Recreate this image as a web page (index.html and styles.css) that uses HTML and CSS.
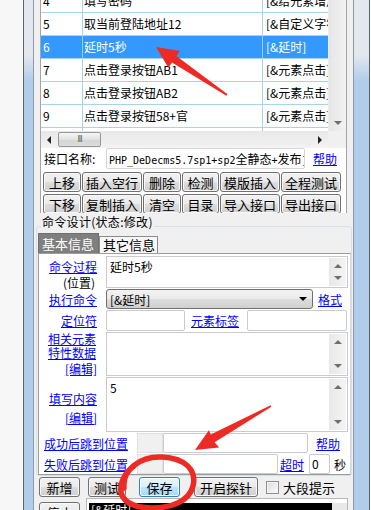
FILE: index.html
```html
<!doctype html>
<html lang="zh-CN">

<head>
  <meta charset="UTF-8">
  <title>接口设计</title>
  <link rel="stylesheet" href="styles.css">
</head>

<body>
  <div class="desk">
    <div class="outside"></div>
    <div class="win">
      <div class="client">

        <!-- command list + interface name + toolbar -->
        <div class="top">
          <div class="list">
            <div class="rows">
              <div class="rows-inner">
                <div class="row"><span class="c1">4</span><span class="c2">填写密码</span><span class="c3">[&amp;给元素增加属性]</span></div>
                <div class="row"><span class="c1">5</span><span class="c2">取当前登陆地址12</span><span class="c3">[&amp;自定义字符串]</span></div>
                <div class="row sel"><span class="c1">6</span><span class="c2">延时5秒</span><span class="c3">[&amp;延时]</span></div>
                <div class="row"><span class="c1">7</span><span class="c2">点击登录按钮AB1</span><span class="c3">[&amp;元素点击]</span></div>
                <div class="row"><span class="c1">8</span><span class="c2">点击登录按钮AB2</span><span class="c3">[&amp;元素点击]</span></div>
                <div class="row"><span class="c1">9</span><span class="c2">点击登录按钮58+官</span><span class="c3">[&amp;元素点击]</span></div>
                <div class="row"><span class="c1">10</span><span class="c2"></span><span class="c3"></span></div>
              </div>
            </div>
            <div class="vscroll"><span class="tri-down"></span></div>
          </div>
          <div class="hscroll">
            <div class="htrack">
              <span class="tri-left"></span>
              <span class="hthumb">III</span>
              <span class="tri-right"></span>
            </div>
            <div class="corner"></div>
          </div>

          <div class="name-row">
            <span class="name-label">接口名称:</span>
            <div class="input name-input">PHP_DeDecms5.7sp1+sp2<span class="cjk">全静态</span>+<span class="cjk">发布</span>]</div>
            <a class="link">帮助</a>
          </div>

          <div class="tools">
            <button class="btn">上移</button>
            <button class="btn">插入空行</button>
            <button class="btn">删除</button>
            <button class="btn">检测</button>
            <button class="btn">模版插入</button>
            <button class="btn">全程测试</button>
            <button class="btn">下移</button>
            <button class="btn">复制插入</button>
            <button class="btn">清空</button>
            <button class="btn">目录</button>
            <button class="btn">导入接口</button>
            <button class="btn">导出接口</button>
          </div>
        </div>

        <!-- command design group -->
        <div class="group">
          <div class="group-title">命令设计(状态:修改)</div>
          <div class="tabs">
            <span class="tab on">基本信息</span>
            <span class="tab">其它信息</span>
          </div>
          <div class="panel">
            <div class="frow r1">
              <div class="lab">
                <a class="link">命令过程</a>
                <span class="plain">(位置)</span>
              </div>
              <div class="memo">
                <div class="memo-text">延时5秒</div>
                <div class="mscroll"><span class="tri-up"></span><span class="tri-dn"></span></div>
              </div>
            </div>

            <div class="frow r2">
              <div class="lab mid"><a class="link">执行命令</a></div>
              <div class="combo"><span>[&amp;延时]</span><span class="combo-arrow"></span></div>
              <a class="link fmt">格式</a>
            </div>

            <div class="frow r3">
              <div class="lab mid"><a class="link">定位符</a></div>
              <div class="input loc"></div>
              <a class="link tag">元素标签</a>
              <div class="input tagval"></div>
            </div>

            <div class="frow r4">
              <div class="lab stack">
                <a class="link wrap">相关元素特性数据</a>
                <a class="link">[编辑]</a>
              </div>
              <div class="memo">
                <div class="memo-text"></div>
                <div class="mscroll"><span class="tri-up"></span><span class="tri-dn"></span></div>
              </div>
            </div>

            <div class="frow r5">
              <div class="lab center">
                <a class="link">填写内容</a>
                <a class="link">[编辑]</a>
              </div>
              <div class="memo">
                <div class="memo-text">5</div>
                <div class="mscroll"><span class="tri-up"></span><span class="tri-dn"></span></div>
              </div>
            </div>

            <div class="jrow">
              <a class="link jlab">成功后跳到位置</a>
              <div class="jbox"></div>
              <div class="input jin ok"></div>
              <a class="link help2">帮助</a>
            </div>

            <div class="jrow">
              <a class="link jlab">失败后跳到位置</a>
              <div class="jbox"></div>
              <div class="input jin fail"></div>
              <a class="link">超时</a>
              <div class="input secs">0</div>
              <span class="plain">秒</span>
            </div>
          </div>
        </div>

        <!-- bottom actions -->
        <div class="actions">
          <button class="btn w41">新增</button>
          <button class="btn w38 gap8">测试</button>
          <button class="btn w41 hot gap13">保存</button>
          <button class="btn w64 gap14">开启探针</button>
          <span class="check"></span>
          <span class="check-label">大段提示</span>
        </div>
        <div class="last">
          <button class="btn w41">停止</button>
          <div class="log">
            <div class="log-text">[&amp;延时]</div>
            <div class="log-scroll"></div>
          </div>
        </div>

      </div>
    </div>
  </div>

  <!-- red annotations drawn over the screenshot -->
  <svg class="marks" width="371" height="510" viewBox="0 0 371 510">
    <polygon points="156,47 180,51 176.4,56 227.6,94.2 226.4,95.8 172,62.6 168.4,67.8" />
    <polygon points="195,450 208.9,430.3 210.8,434.5 270.6,405.3 271.4,406.7 214.6,442.3 219.1,447.5" />
    <path d="M124 488 C122 470 140 456 162 457 C185 458 197 470 193 486 C189 502 170 508 152 508 C132 508 119 500 121 487 C122 478 128 470 134 466" />
  </svg>
</body>

</html>
```

FILE: styles.css
```css
html,
body {
  margin: 0;
  background-color: #fff;
  height: 100%;
  overflow: hidden;
}

body {
  width: 371px;
  height: 510px;
  font-family: "Noto Sans CJK SC", "Noto Sans", sans-serif;
  font-size: 12px;
  color: #000;
}

.desk {
  display: flex;
  height: 510px;
}

.outside {
  width: 23px;
  flex: none;
  background-color: #f7f7f7;
}

/* window frame (Win7 basic look) */

.win {
  width: 347px;
  box-sizing: border-box;
  flex: none;
  display: flex;
  border-left: 1px solid #5a6470;
  border-right: 1px solid #5a6470;
  padding: 0 15px 0 9px;
  background: linear-gradient(to bottom, #e3e8ee 0, #e3e8ee 55px, #b2cdea 80px, #b2cdea 100%);
}

.client {
  width: 321px;
  box-sizing: border-box;
  border-left: 1px solid #8d9cab;
  border-right: 1px solid #8d9cab;
  background-color: #f0f0f0;
  display: flex;
  flex-direction: column;
}

/* top white box */

.top {
  margin: 0 6px;
  height: 213px;
  overflow: hidden;
  background-color: #fff;
  border-left: 1px solid #a5a5a5;
  border-right: 1px solid #a5a5a5;
  flex: none;
}

.list {
  display: flex;
  height: 131px;
}

.rows {
  width: 287px;
  overflow: hidden;
}

.rows-inner {
  margin-top: -10px;
}

.row {
  display: grid;
  grid-template-columns: 42px 180px 1fr;
  height: 23px;
  box-sizing: border-box;
  border-bottom: 1px solid #a4d6e8;
  line-height: 22px;
  white-space: nowrap;
}

.row span {
  overflow: hidden;
}

.c1 {
  padding-left: 2px;
  border-right: 1px solid #a4d6e8;
}

.c2 {
  padding-left: 1px;
  border-right: 1px solid #a4d6e8;
}

.c3 {
  padding-left: 3px;
}

.row.sel {
  background-color: #3399ff;
  color: #fff;
}

.row.sel .c1,
.row.sel .c2 {
  border-right-color: #9ccaf6;
}

.vscroll {
  width: 18px;
  background: linear-gradient(to right, #e6e6e6, #f2f2f2);
  border-left: 1px solid #ececec;
  display: flex;
  align-items: flex-end;
  justify-content: center;
  padding-bottom: 6px;
  box-sizing: border-box;
}

.tri-down,
.tri-dn {
  width: 0;
  height: 0;
  border-left: 4px solid transparent;
  border-right: 4px solid transparent;
  border-top: 4px solid #6e6e6e;
}

.tri-up {
  width: 0;
  height: 0;
  border-left: 4px solid transparent;
  border-right: 4px solid transparent;
  border-bottom: 4px solid #6e6e6e;
}

.hscroll {
  display: flex;
  height: 17px;
}

.htrack {
  width: 287px;
  display: flex;
  align-items: center;
  background: linear-gradient(to bottom, #e8e8e8, #f3f3f3);
  padding: 0 6px 0 6px;
  box-sizing: border-box;
}

.tri-left {
  width: 0;
  height: 0;
  border-top: 4px solid transparent;
  border-bottom: 4px solid transparent;
  border-right: 4px solid #222;
}

.tri-right {
  margin-left: auto;
  width: 0;
  height: 0;
  border-top: 4px solid transparent;
  border-bottom: 4px solid transparent;
  border-left: 4px solid #222;
}

.hthumb {
  margin-left: 7px;
  width: 43px;
  height: 15px;
  box-sizing: border-box;
  border: 1px solid #979797;
  border-radius: 2px;
  background: linear-gradient(to bottom, #f5f5f5, #e2e2e2 50%, #d4d4d4 51%, #dcdcdc);
  font-family: "DejaVu Sans", sans-serif;
  font-size: 8px;
  line-height: 13px;
  text-align: center;
  color: #606060;
  letter-spacing: -1px;
}

.corner {
  flex: 1;
  background-color: #f0f0f0;
}

.name-row {
  display: flex;
  align-items: center;
  height: 21px;
  padding-left: 3px;
}

.name-label {
  width: 62px;
  flex: none;
}

.input {
  box-sizing: border-box;
  background-color: #fff;
  border: 1px solid #c8cbd0;
  border-radius: 2px;
  flex: none;
}

.name-input {
  width: 199px;
  height: 21px;
  line-height: 19px;
  padding-left: 2px;
  white-space: nowrap;
  overflow: hidden;
  border-color: #d3d6da;
  font-family: "DejaVu Sans Mono", "Noto Sans CJK SC", monospace;
  font-size: 10px;
}

.name-input .cjk {
  font-family: "Noto Sans CJK SC", sans-serif;
  font-size: 12px;
}

.name-row .link {
  margin-left: 8px;
}

.link {
  color: #0000ff;
  text-decoration: underline;
  white-space: nowrap;
}

.tools {
  margin: 3px 0 0 2px;
  display: grid;
  grid-template-columns: 38px 60px 38px 37px 60px 60px;
  gap: 2px 1px;
}

.btn {
  height: 20px;
  box-sizing: border-box;
  padding: 0;
  margin: 0;
  border: 1px solid #707070;
  border-radius: 3px;
  background: linear-gradient(to bottom, #f2f2f2 0, #ebebeb 50%, #dddddd 51%, #cfcfcf 100%);
  box-shadow: inset 0 0 0 1px #f8f8f8;
  font-family: "Noto Sans CJK SC", "Noto Sans", sans-serif;
  font-size: 13px;
  line-height: 17px;
  color: #000;
  text-align: center;
  white-space: nowrap;
  flex: none;
}

.btn.hot {
  border-color: #3c7fb1;
  background: linear-gradient(to bottom, #eaf6fd 0, #d9f0fc 50%, #bee6fd 51%, #a7d9f5 100%);
  box-shadow: inset 0 0 0 1px #f4fbff;
}

/* group box */

.group {
  margin: 13px 1px 0 2px;
  border: 1px solid #d5dfe5;
  border-radius: 3px;
  flex: none;
}

.group-title {
  margin: -12px 0 0 4px;
  padding: 0 1px;
  width: max-content;
  line-height: 14px;
  background-color: #f0f0f0;
  letter-spacing: 0.3px;
}

.tabs {
  display: flex;
  align-items: flex-end;
  margin: 4px 0 0 1px;
  height: 20px;
}

.tab {
  box-sizing: border-box;
  width: 59px;
  height: 17px;
  line-height: 16px;
  padding-left: 3px;
  border: 1px solid #8c8c8c;
  border-bottom: none;
  background-color: #f7f7f7;
  font-size: 13px;
}

.tab.on {
  width: 61px;
  height: 20px;
  line-height: 19px;
  border-color: #6f6f6f;
  background-color: #7f7f7f;
  color: #fff;
}

.panel {
  margin-left: 1px;
  height: 222px;
  box-sizing: border-box;
  border: 1px solid #9c9c9c;
  border-right-color: #d8d8d8;
  background-color: #fff;
  padding: 2px 0 0 0;
  display: flex;
  flex-direction: column;
  gap: 1px;
}

.frow {
  display: flex;
}

.lab {
  width: 58px;
  margin-right: 8px;
  display: flex;
  flex-direction: column;
  align-items: flex-end;
  padding-right: 1px;
}

.lab.mid {
  justify-content: center;
}

.lab.center {
  justify-content: center;
  gap: 2px;
  padding-top: 6px;
}

.lab .plain {
  margin-right: 2px;
  line-height: 16px;
}

.r1 {
  height: 32px;
}

.r1 .lab {
  padding-top: 3px;
  line-height: 16px;
}

.r2 {
  height: 20px;
  align-items: center;
}

.r3 {
  height: 21px;
  align-items: center;
}

.r4 {
  height: 44px;
}

.r5 {
  height: 55px;
}

.lab.stack {
  line-height: 14px;
  justify-content: space-between;
}

.lab.stack .wrap {
  white-space: normal;
  width: 48px;
  margin-right: 1px;
}

.memo {
  width: 242px;
  box-sizing: border-box;
  border: 1px solid #c9cbcf;
  display: flex;
}

.memo-text {
  flex: 1;
  padding: 2px 3px;
  line-height: 16px;
}

.mscroll {
  width: 17px;
  margin: 1px;
  background: linear-gradient(to right, #e8e8e8, #f4f4f4);
  display: flex;
  flex-direction: column;
  align-items: center;
  justify-content: space-between;
  padding: 6px 0;
  box-sizing: border-box;
}

.combo {
  width: 207px;
  height: 20px;
  box-sizing: border-box;
  border: 1px solid #707070;
  border-radius: 3px;
  background: linear-gradient(to bottom, #f2f2f2 0, #ebebeb 50%, #dddddd 51%, #cfcfcf 100%);
  display: flex;
  align-items: center;
  padding: 0 5px 0 3px;
}

.combo-arrow {
  margin-left: auto;
  width: 0;
  height: 0;
  border-left: 4px solid transparent;
  border-right: 4px solid transparent;
  border-top: 4px solid #000;
}

.fmt {
  margin-left: 5px;
}

.loc {
  width: 79px;
  height: 21px;
}

.tag {
  margin: 0 8px 0 6px;
}

.tagval {
  width: 100px;
  height: 21px;
}

.jrow {
  display: flex;
  align-items: center;
  height: 20px;
}

.jlab {
  margin-left: 5px;
  width: 84px;
  margin-right: 9px;
}

.jbox {
  width: 26px;
  height: 20px;
  box-sizing: border-box;
  background-color: #f0f0f0;
  border: 1px solid #e0e0e0;
}

.jin {
  height: 20px;
}

.jin.ok {
  width: 145px;
}

.jin.fail {
  width: 115px;
  margin-right: 2px;
}

.help2 {
  margin-left: 8px;
}

.secs {
  margin-left: 5px;
  width: 21px;
  height: 20px;
  padding-left: 2px;
  line-height: 18px;
}

.jrow .plain {
  margin-left: 4px;
}

/* bottom action buttons */

.actions {
  display: flex;
  align-items: center;
  margin: 1px 0 0 5px;
  height: 20px;
}

.w41 {
  width: 41px;
}

.w38 {
  width: 38px;
}

.w64 {
  width: 64px;
}

.gap8 {
  margin-left: 8px;
}

.gap13 {
  margin-left: 13px;
}

.gap14 {
  margin-left: 14px;
}

.check {
  margin-left: 8px;
  width: 13px;
  height: 13px;
  box-sizing: border-box;
  border: 1px solid #8f8f8f;
  background: linear-gradient(135deg, #dcdcdc, #fbfbfb);
  box-shadow: inset 0 0 0 1px #f4f4f4;
}

.check-label {
  margin-left: 4px;
  font-size: 13px;
}

.last {
  display: flex;
  margin: 1px 0 0 5px;
}

.last .btn {
  margin-top: 4px;
}

.log {
  margin-left: 6px;
  width: 262px;
  height: 20px;
  box-sizing: border-box;
  border: 1px solid #b8b8b8;
  background-color: #fff;
  display: flex;
  padding: 4px 0 0 2px;
}

.log-text {
  flex: 1;
  background-color: #000;
  color: #fff;
  line-height: 14px;
  padding-left: 2px;
}

.log-scroll {
  width: 15px;
  background-color: #e8e8e8;
}

/* annotation layer */

.marks {
  position: absolute;
  left: 0;
  top: 0;
  pointer-events: none;
}

.marks polygon {
  fill: #ee2a24;
}

.marks path {
  fill: none;
  stroke: #ee2a24;
  stroke-width: 5.5;
  stroke-linecap: round;
}
```
